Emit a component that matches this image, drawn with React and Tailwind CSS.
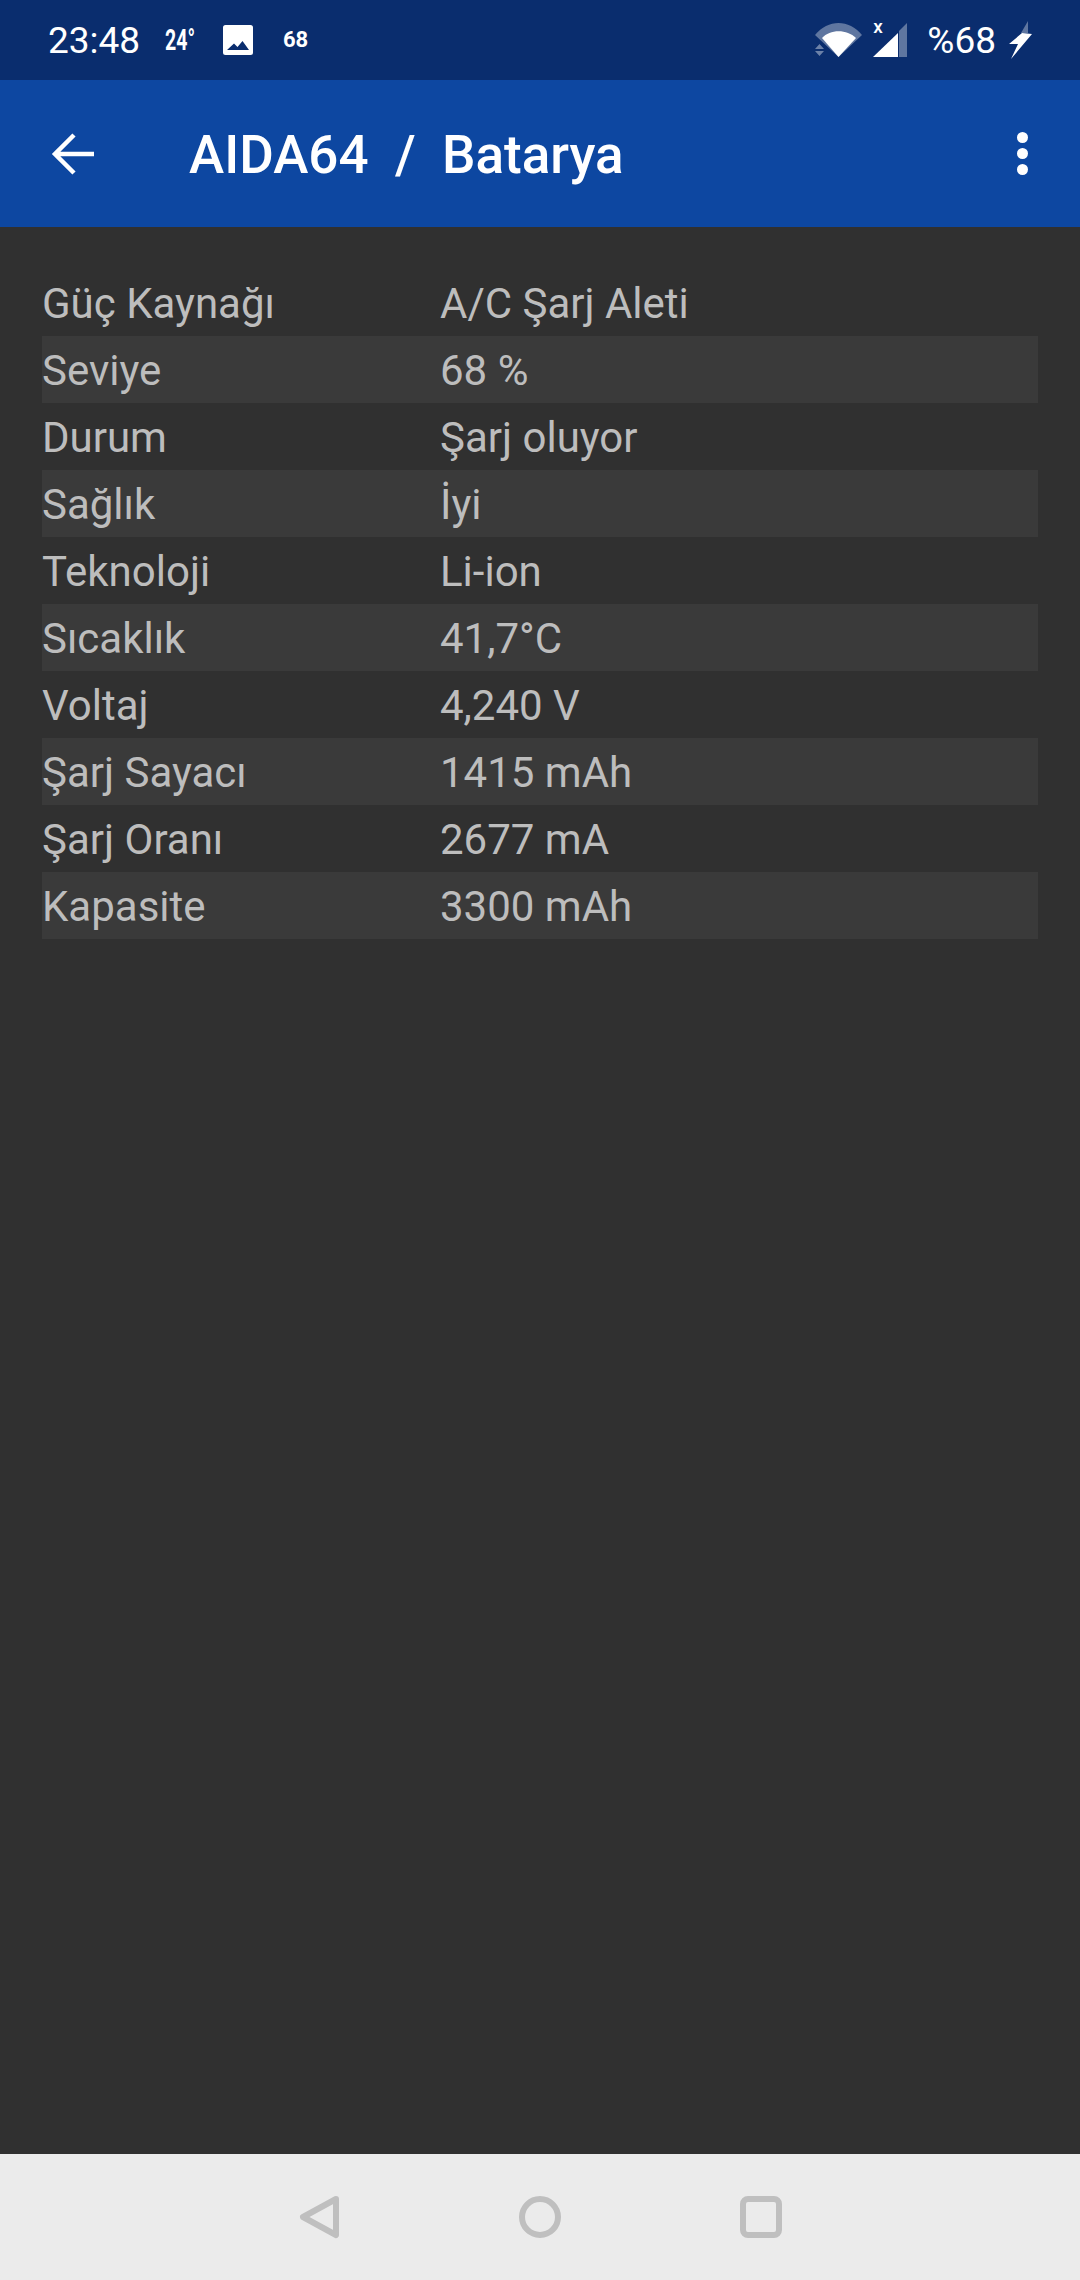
const rows = [
  ["Güç Kaynağı", "A/C Şarj Aleti"],
  ["Seviye", "68 %"],
  ["Durum", "Şarj oluyor"],
  ["Sağlık", "İyi"],
  ["Teknoloji", "Li-ion"],
  ["Sıcaklık", "41,7°C"],
  ["Voltaj", "4,240 V"],
  ["Şarj Sayacı", "1415 mAh"],
  ["Şarj Oranı", "2677 mA"],
  ["Kapasite", "3300 mAh"],
];

export default function App() {
  return (
    <div className="w-[1080px] h-[2280px] flex flex-col bg-[#303030] font-['Roboto',sans-serif] overflow-hidden">
      <div className="h-[80px] bg-[#0a2d6e] flex items-center text-white pl-[48px] pr-[48px] shrink-0">
        <span className="text-[37px] leading-none w-[117px]">23:48</span>
        <span className="text-[30px] font-bold leading-none w-[58px] scale-x-[0.65] origin-left">24°</span>
        <svg width="30" height="30" viewBox="0 0 30 30" className="mr-[30px]">
          <path fill="#fff" fillRule="evenodd" d="M2.5 0h25A2.5 2.5 0 0 1 30 2.5v25a2.500 2.500 0 0 1-2.500 2.500h-25A2.500 2.500 0 0 1 0 27.500v-25A2.500 2.500 0 0 1 2.500 0ZM4 25h22l-6.500-9-5 6-3.500-3.500Z" />
        </svg>
        <span className="text-[22px] font-bold leading-none">68</span>
        <div className="flex-1" />
        <svg width="47" height="34" viewBox="0 0 47 34" className="mr-[11px]">
          <path fill="#fff" fillOpacity="0.35" d="M0 12C13-4 34-4 47 12L23.500 34Z" />
          <path fill="#fff" d="M7 15C15 6 32 6 41 15L23.500 34Z" />
          <path fill="#fff" fillOpacity="0.4" d="M0 26h9l-4.500-5ZM0 28h9l-4.500 5Z" />
        </svg>
        <div className="relative w-[34px] h-[34px] mr-[20px]">
          <span className="absolute left-0 top-[-6px] text-[19px] font-medium leading-none">x</span>
          <svg width="34" height="34" viewBox="0 0 34 34">
            <path fill="#fff" fillOpacity="0.35" d="M34 0v34h-8V8Z" />
            <path fill="#fff" d="M25 10v24H0Z" />
          </svg>
        </div>
        <span className="text-[37px] leading-none mr-[13px]">%68</span>
        <svg width="23" height="38" viewBox="0 0 23 38">
          <path fill="#fff" fillOpacity="0.35" d="M19 0 12 12h7Z" />
          <path fill="#fff" d="M13 12 23 13 2 38 9 23H0Z" />
        </svg>
      </div>

      <div className="h-[147px] bg-[#0d47a1] flex items-center text-white shrink-0 pl-[50px] pr-[52px]">
        <svg width="46" height="44" viewBox="0 0 46 44" className="mr-[93px]">
          <path fill="none" stroke="#fff" strokeWidth="4.5" d="M44 22H5M24 3 5 22l19 19" />
        </svg>
        <span className="text-[53px] font-medium leading-none whitespace-pre pt-[3px]">AIDA64  /  Batarya</span>
        <div className="flex-1" />
        <div className="flex flex-col gap-[5px]">
          <div className="w-[11px] h-[11px] rounded-full bg-white" />
          <div className="w-[11px] h-[11px] rounded-full bg-white" />
          <div className="w-[11px] h-[11px] rounded-full bg-white" />
        </div>
      </div>

      <div className="flex-1 pt-[42px] px-[42px]">
        {rows.map(([k, v], i) => (
          <div key={k} className={`h-[67px] flex items-center pt-[3px] text-[42px] leading-none text-[#bdbdbd] ${i % 2 ? "bg-[#3a3a3a]" : ""}`}>
            <span className="w-[398px]">{k}</span>
            <span>{v}</span>
          </div>
        ))}
      </div>

      <div className="h-[126px] bg-[#ebebeb] flex items-center justify-center gap-[179px] shrink-0">
        <svg width="42" height="44" viewBox="0 0 42 44">
          <path fill="none" stroke="#bfbfbf" strokeWidth="6" strokeLinejoin="round" d="M38 4 5 22l33 18Z" />
        </svg>
        <svg width="42" height="42" viewBox="0 0 42 42">
          <circle cx="21" cy="21" r="18" fill="none" stroke="#bfbfbf" strokeWidth="6" />
        </svg>
        <svg width="42" height="42" viewBox="0 0 42 42">
          <rect x="3" y="3" width="36" height="36" rx="5" fill="none" stroke="#bfbfbf" strokeWidth="6" />
        </svg>
      </div>
    </div>
  );
}
